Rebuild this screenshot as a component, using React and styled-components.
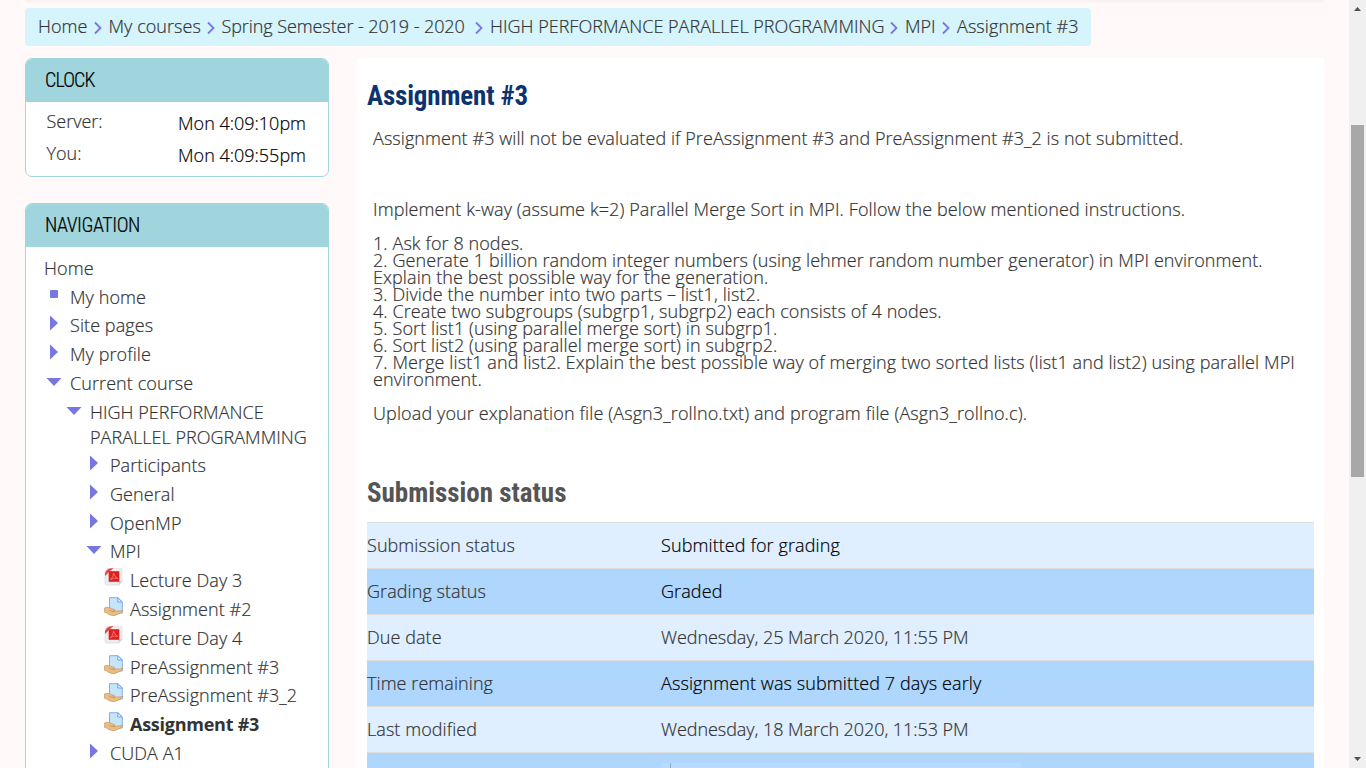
import React from 'react';
import styled, { createGlobalStyle } from 'styled-components';

const GlobalStyle = createGlobalStyle`
  * { box-sizing: border-box; }
  html, body { margin: 0; height: 768px; overflow: hidden; }
  body {
    background: #fff9f9;
    color: #333;
    font: 300 18px/25.2px "Open Sans", "Noto Sans", sans-serif;
    -webkit-text-stroke: 0.2px;
  }
`;

const Window = styled.div`
  display: flex;
  width: 1366px;
  height: 768px;
  overflow: hidden;
`;

const Page = styled.div`
  width: 1349px;
  height: 768px;
  overflow: hidden;
  padding: 0 25px;
`;

const BannerEdge = styled.div`
  height: 8px;
  background: linear-gradient(#f7efef, #fff9f9 4px);
`;

const Breadcrumb = styled.nav`
  display: flex;
  align-items: center;
  width: 1066px;
  height: 38px;
  padding: 0 0 0 13px;
  border-radius: 4px;
  background: #d5f4fc;
  white-space: nowrap;
`;

const Crumb = styled.span`
  width: ${(p) => p.$width}px;
  flex: none;
  letter-spacing: ${(p) => p.$track || 0}px;
`;

const Chevron = styled.svg`
  flex: none;
  width: 8px;
  height: 14px;
  margin: 2px 7px 0 ${(p) => p.$gap || 6}px;
`;

const Columns = styled.div`
  display: flex;
  gap: 28px;
  margin-top: 12px;
`;

const Sidebar = styled.aside`
  display: flex;
  flex-direction: column;
  gap: 26px;
  width: 304px;
`;

const Block = styled.section`
  height: ${(p) => p.$height}px;
  border: 1px solid #a1d6df;
  border-radius: 7px;
  background: #fff;
  overflow: hidden;
`;

const BlockTitle = styled.h2`
  height: 43px;
  margin: 0;
  padding-left: 19px;
  background: #a1d5dd;
  color: #000;
  font: 300 20px/43px "Roboto Condensed", "Roboto", sans-serif;
  font-stretch: 75%;
  letter-spacing: ${(p) => p.$track}px;
`;

const ClockRow = styled.div`
  display: flex;
  justify-content: space-between;
  height: 32px;
  padding: 0 22px 0 20.5px;
`;

const ClockRows = styled.div`
  padding-top: 7px;
`;

const ClockTime = styled.span`
  margin-top: 2px;
  color: #000;
`;

const Tree = styled.ul`
  margin: 0;
  padding: 8.8px 0 0 18px;
  list-style: none;
`;

const TreeItem = styled.li`
  display: flex;
  gap: ${(p) => (p.$file ? 6 : 8)}px;
  margin-bottom: ${(p) => (p.$wrapped ? 2.8 : 3.6)}px;
  padding-left: ${(p) => p.$indent}px;
  font-weight: ${(p) => (p.$current ? 700 : 300)};
  letter-spacing: ${(p) => (p.$current ? -0.25 : p.$wrapped ? 0.03 : 0.08)}px;
  -webkit-text-stroke: ${(p) => (p.$current ? 0 : 0.2)}px;
`;

const Marker = styled.svg`
  flex: none;
  width: ${(p) => (p.$file ? 20 : 16)}px;
  height: 20px;
`;

const Main = styled.main`
  width: 967px;
  height: 710px;
  padding: 0 10px;
  background: #fff;
`;

const Title = styled.h2`
  margin: 0;
  color: ${(p) => p.$color};
  font: 700 27px/36px "Roboto Condensed", "Roboto", sans-serif;
  font-stretch: 75%;
  letter-spacing: ${(p) => p.$track}px;
  white-space: nowrap;
  -webkit-text-stroke: 0;
`;

const PageTitle = styled(Title)`
  padding-top: 20px;
`;

const Intro = styled.div`
  padding: 16px 6px 0;
  line-height: 17px;
`;

const Paragraph = styled.p`
  margin: 0 0 ${(p) => p.$after || 17}px;
  letter-spacing: ${(p) => p.$track}px;
  white-space: nowrap;
`;

const StatusTitle = styled(Title)`
  padding-top: 36px;
`;

const StatusTable = styled.div`
  margin-top: 11px;
`;

const StatusRow = styled.div`
  display: flex;
  height: 46px;
  border-top: 1px solid #ddd;
  background: ${(p) => (p.$dark ? '#afd7fd' : '#dfefff')};
  line-height: 44px;
`;

const StatusLabel = styled.div`
  width: 294px;
  letter-spacing: 0.07px;
`;

const StatusValue = styled.div`
  color: ${(p) => (p.$strong ? '#000' : '#333')};
  letter-spacing: ${(p) => (p.$strong ? 0.1 : -0.06)}px;
`;

const CommentBox = styled.div`
  width: 360px;
  height: 40px;
  margin-top: 10px;
  padding-left: 9px;
  background: #b7dbfd;
  &::before {
    content: '';
    display: block;
    width: 1px;
    height: 20px;
    background: #90a9c3;
  }
`;

const Scrollbar = styled.div`
  display: flex;
  flex-direction: column;
  justify-content: space-between;
  align-items: center;
  width: 17px;
  height: 768px;
  background: #f0f0f0;
`;

const ScrollArrow = styled.svg`
  width: 17px;
  height: 17px;
`;

const ScrollThumb = styled.div`
  width: 13px;
  height: 352px;
  margin-bottom: 166px;
  background: #a8a8a8;
`;

const crumbs = [
  { text: 'Home', width: 49.5 },
  { text: 'My courses', width: 92, track: 0.05 },
  { text: 'Spring Semester - 2019 - 2020', width: 243.5, gap: 10, track: -0.08 },
  { text: 'HIGH PERFORMANCE PARALLEL PROGRAMMING', width: 394, track: 0.01 },
  { text: 'MPI', width: 31 },
  { text: 'Assignment #3', width: 122, track: 0.08 },
];

const tree = [
  { icon: 'none', indent: 0, text: 'Home' },
  { icon: 'square', indent: 2, text: 'My home' },
  { icon: 'right', indent: 2, text: 'Site pages' },
  { icon: 'right', indent: 2, text: 'My profile' },
  { icon: 'down', indent: 2, text: 'Current course' },
  { icon: 'down', indent: 22, text: <>HIGH PERFORMANCE<br />PARALLEL PROGRAMMING</>, wrapped: true },
  { icon: 'right', indent: 42, text: 'Participants' },
  { icon: 'right', indent: 42, text: 'General' },
  { icon: 'right', indent: 42, text: 'OpenMP' },
  { icon: 'down', indent: 42, text: 'MPI' },
  { icon: 'pdf', indent: 60, text: 'Lecture Day 3' },
  { icon: 'assign', indent: 60, text: 'Assignment #2' },
  { icon: 'pdf', indent: 60, text: 'Lecture Day 4' },
  { icon: 'assign', indent: 60, text: 'PreAssignment #3' },
  { icon: 'assign', indent: 60, text: 'PreAssignment #3_2' },
  { icon: 'assign', indent: 60, text: 'Assignment #3', current: true },
  { icon: 'right', indent: 42, text: 'CUDA A1' },
];

const statuses = [
  { label: 'Submission status', value: 'Submitted for grading', strong: true },
  { label: 'Grading status', value: 'Graded', strong: true },
  { label: 'Due date', value: 'Wednesday, 25 March 2020, 11:55 PM' },
  { label: 'Time remaining', value: 'Assignment was submitted 7 days early', strong: true },
  { label: 'Last modified', value: 'Wednesday, 18 March 2020, 11:53 PM' },
];

function Glyph({ icon }) {
  if (icon === 'none') return null;
  if (icon === 'square') {
    return <Marker viewBox="0 0 16 20"><rect x="4" y="5" width="8" height="8" rx="1" fill="#7777e2" /></Marker>;
  }
  if (icon === 'right') {
    return <Marker viewBox="0 0 16 20"><path d="M4 2.5 L12 10 L4 17.5Z" fill="#7777e2" /></Marker>;
  }
  if (icon === 'down') {
    return <Marker viewBox="0 0 16 20"><path d="M0.5 7 H15.5 L8 15Z" fill="#7777e2" /></Marker>;
  }
  if (icon === 'pdf') {
    return (
      <Marker $file viewBox="0 0 20 20">
        <path d="M3 .2 H16 Q18 .2 18 2.2 V14 L15 17 H3 Q1 17 1 15 V3Z" fill="#eeeef0" stroke="#d9dadd" strokeWidth=".7" />
        <path d="M18 13 L14 17 Q15 15 14.5 13.5 Z" fill="#c6c8cc" />
        <path d="M1 8 Q.4 .1 9.5 0 L4.8 4.2Z" fill="#e84845" />
        <rect x="4.7" y="3.2" width="10.6" height="10.6" fill="#df2020" />
        <path d="M9.6 5 Q10.4 8.5 13.6 10.4 Q9.5 9.2 6.6 11.6 Q9 9.6 9.6 5Z" fill="none" stroke="#f28480" strokeWidth=".8" />
      </Marker>
    );
  }
  return (
    <Marker $file viewBox="0 0 20 20">
      <path d="M5.5 .7 H13.8 L18.3 5 V16 H5.5Z" fill="#c6e5fb" stroke="#82afea" />
      <path d="M13.8 .7 V5 H18.3Z" fill="#e8f5ff" stroke="#719fe5" />
      <path d="M.4 11 Q3 9.8 5.5 10.6 Q8 12 10.3 12.4 Q11.5 13.2 9.2 13.5 Q12 14.6 19 13.4 Q20 14.5 15 16.8 Q10 20 5.2 17.7 Q2.5 15.5 .3 15.2Z" fill="#e9bd84" stroke="#c99860" strokeWidth=".7" />
      <path d="M5 13 Q7 14.8 11 14.6" fill="none" stroke="#c08c55" strokeWidth=".7" />
    </Marker>
  );
}

export default function App() {
  return (
    <Window>
      <GlobalStyle />
      <Page>
        <BannerEdge />
        <Breadcrumb>
          {crumbs.map((c, i) => (
            <React.Fragment key={c.text}>
              {i > 0 && (
                <Chevron $gap={crumbs[i - 1].gap} viewBox="0 0 8 14">
                  <path d="M1 1.5 L6.5 7 L1 12.5" fill="none" stroke="#7777e2" strokeWidth="1.8" />
                </Chevron>
              )}
              <Crumb $width={c.width} $track={c.track}>{c.text}</Crumb>
            </React.Fragment>
          ))}
        </Breadcrumb>
        <Columns>
          <Sidebar>
            <Block $height={119}>
              <BlockTitle $track={-0.9}>CLOCK</BlockTitle>
              <ClockRows>
                <ClockRow><span>Server:</span><ClockTime>Mon 4:09:10pm</ClockTime></ClockRow>
                <ClockRow><span>You:</span><ClockTime>Mon 4:09:55pm</ClockTime></ClockRow>
              </ClockRows>
            </Block>
            <Block $height={600}>
              <BlockTitle $track={-0.45}>NAVIGATION</BlockTitle>
              <Tree>
                {tree.map((t, i) => (
                  <TreeItem
                    key={i}
                    $indent={t.indent}
                    $file={t.icon === 'pdf' || t.icon === 'assign'}
                    $current={t.current}
                    $wrapped={t.wrapped}
                  >
                    <Glyph icon={t.icon} />
                    <span>{t.text}</span>
                  </TreeItem>
                ))}
              </Tree>
            </Block>
          </Sidebar>
          <Main>
            <PageTitle $color="#0b336e" $track={-0.15}>Assignment #3</PageTitle>
            <Intro>
              <Paragraph $after={54} $track={0.065}>Assignment #3 will not be evaluated if PreAssignment #3 and PreAssignment #3_2 is not submitted.</Paragraph>
              <Paragraph $track={0.1}>Implement k-way (assume k=2) Parallel Merge Sort in MPI. Follow the below mentioned instructions.</Paragraph>
              <Paragraph $track={0.085}>
                1. Ask for 8 nodes.<br />
                2. Generate 1 billion random integer numbers (using lehmer random number generator) in MPI environment.<br />
                Explain the best possible way for the generation.<br />
                3. Divide the number into two parts – list1, list2.<br />
                4. Create two subgroups (subgrp1, subgrp2) each consists of 4 nodes.<br />
                5. Sort list1 (using parallel merge sort) in subgrp1.<br />
                6. Sort list2 (using parallel merge sort) in subgrp2.<br />
                7. Merge list1 and list2. Explain the best possible way of merging two sorted lists (list1 and list2) using parallel MPI<br />
                environment.
              </Paragraph>
              <Paragraph $track={0.12}>Upload your explanation file (Asgn3_rollno.txt) and program file (Asgn3_rollno.c).</Paragraph>
            </Intro>
            <StatusTitle $color="#555" $track={0}>Submission status</StatusTitle>
            <StatusTable>
              {statuses.map((s, i) => (
                <StatusRow key={s.label} $dark={i % 2 === 1}>
                  <StatusLabel>{s.label}</StatusLabel>
                  <StatusValue $strong={s.strong}>{s.value}</StatusValue>
                </StatusRow>
              ))}
              <StatusRow $dark>
                <StatusLabel />
                <CommentBox />
              </StatusRow>
            </StatusTable>
          </Main>
        </Columns>
      </Page>
      <Scrollbar>
        <ScrollArrow viewBox="0 0 17 17"><path d="M5 11 L8.5 7 L12 11Z" fill="#505050" /></ScrollArrow>
        <ScrollThumb />
        <ScrollArrow viewBox="0 0 17 17"><path d="M5 6 L8.5 10 L12 6Z" fill="#505050" /></ScrollArrow>
      </Scrollbar>
    </Window>
  );
}
